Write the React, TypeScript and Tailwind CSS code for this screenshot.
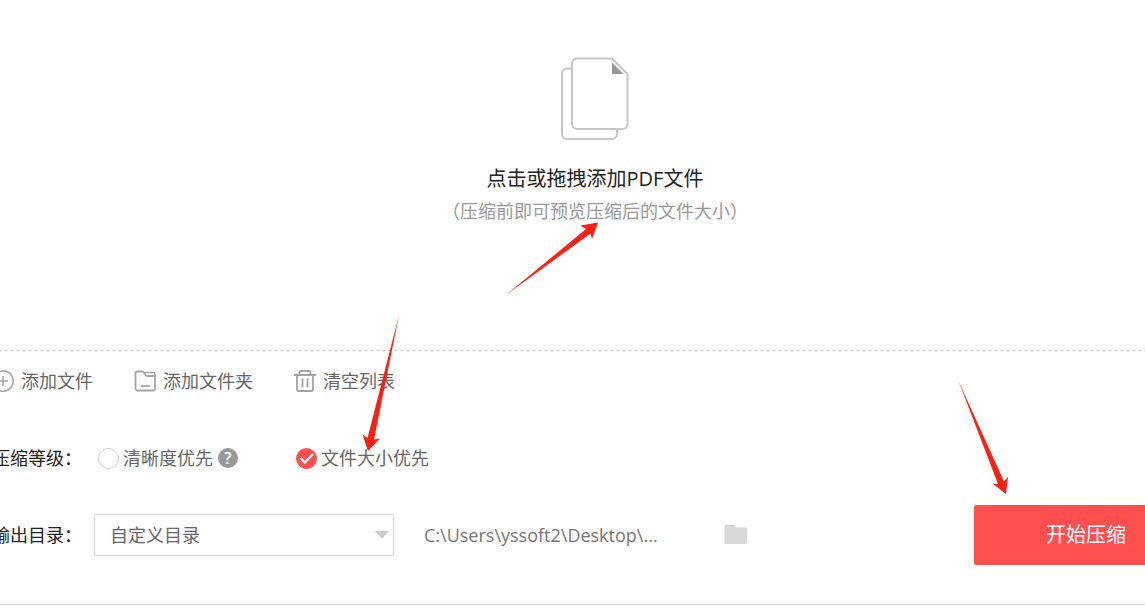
import { useState } from "react";

const LEVELS = [
  { id: "clarity", label: "清晰度优先", help: true },
  { id: "size", label: "文件大小优先", help: false },
];

function DocumentsIcon() {
  return (
    <svg width="70" height="84" viewBox="0 0 70 84" fill="none" stroke="#c6c6c6" strokeWidth="2">
      <path d="M11 11.5H7a5 5 0 0 0-5 5V77a5 5 0 0 0 5 5h45a5 5 0 0 0 5-5v-4" />
      <path d="M17 1.5H52L67.500 17V67a5 5 0 0 1-5 5H17a5 5 0 0 1-5-5V6.5a5 5 0 0 1 5-5Z" strokeLinejoin="round" />
      <path d="M52 5.5V17H63.5Z" fill="#999" stroke="none" />
    </svg>
  );
}

function PlusCircleIcon() {
  return (
    <svg width="22" height="22" viewBox="0 0 22 22" fill="none" stroke="#a3a3a3" strokeWidth="1.5">
      <circle cx="11" cy="11" r="10.2" />
      <path d="M6 11h10M11 6v10" />
    </svg>
  );
}

function FolderOutlineIcon() {
  return (
    <svg width="22" height="22" viewBox="0 0 22 22" fill="none" stroke="#a6a6a6" strokeWidth="1.8" strokeLinejoin="round">
      <path d="M3 1.500H9L12.500 6H21V18.500a2 2 0 0 1-2 2H3.500a2 2 0 0 1-2-2V3A1.500 1.500 0 0 1 3 1.500Z" />
      <path d="M10 2.500H19.500A1.500 1.500 0 0 1 21 4V6" strokeWidth="1.4" />
      <path d="M7 16h9" />
    </svg>
  );
}

function TrashIcon() {
  return (
    <svg width="22" height="22" viewBox="0 0 22 22" fill="none" stroke="#a3a3a3" strokeWidth="1.8">
      <path d="M0 5H22M5.500 5V2A1.200 1.200 0 0 1 6.700 1h8.600a1.200 1.200 0 0 1 1.200 1V5" />
      <path d="M3 5V19A2 2 0 0 0 5 21H17a2 2 0 0 0 2-2V5" />
      <path d="M8.500 8.500v9M13.500 8.500v9" />
    </svg>
  );
}

function FolderIcon() {
  return (
    <svg width="24" height="20" viewBox="0 0 24 20" fill="#d8d8d8">
      <path d="M2 0h8a1.5 1.5 0 0 1 1.5 1l.5 1.500H21a2 2 0 0 1 2 2V17a2 2 0 0 1-2 2H2a1.5 1.5 0 0 1-1.5-1.500V1.500A1.500 1.500 0 0 1 2 0Z" />
    </svg>
  );
}

function Arrows() {
  return (
    <svg
      className="pointer-events-none absolute top-0 left-0"
      width="1145"
      height="610"
      viewBox="0 0 1145 610"
      fill="#fb2112"
      aria-hidden="true"
    >
      <path d="M506 295L586 229L580.500 225.500L598 222.500L592 239L590.500 233.500Z" />
      <path d="M399 315L367.500 438L362.500 434.500L368 451L380 438.500L374 439.500Z" />
      <path d="M958.500 381L998 484L992.500 483.500L1006 494L1008 477L1004 481.500Z" />
    </svg>
  );
}

export default function App() {
  const [level, setLevel] = useState("size");

  return (
    <div className="relative overflow-hidden bg-white font-['Open_Sans','Noto_Sans_CJK_SC',sans-serif] text-lg leading-6 text-[#666]">
      <main className="-mr-[53px] -ml-2 pb-1">
        <button type="button" className="flex h-[350px] w-full flex-col items-center pt-[57px]">
          <DocumentsIcon />
          <span className="mt-6 text-xl leading-7 text-[#222]">点击或拖拽添加PDF文件</span>
          <span className="mt-1.5 text-[#999]">（压缩前即可预览压缩后的文件大小）</span>
        </button>
        <div className="h-px bg-[repeating-linear-gradient(90deg,#d0d0d0_0_4px,transparent_4px_6px)]" />

        <div className="mt-[18px] flex items-center gap-[41px]">
          <button type="button" className="flex items-center gap-[7px]">
            <PlusCircleIcon />
            添加文件
          </button>
          <button type="button" className="flex items-center gap-[7px]">
            <FolderOutlineIcon />
            添加文件夹
          </button>
          <button type="button" className="flex items-center gap-[7px]">
            <TrashIcon />
            清空列表
          </button>
        </div>

        <div role="radiogroup" aria-labelledby="level-label" className="mt-[53px] flex items-center">
          <span id="level-label" className="w-[106px] shrink-0 text-[#222]">
            压缩等级：
          </span>
          <div className="flex items-center gap-[58px]">
            {LEVELS.map((item) => (
              <div key={item.id} className="flex items-center gap-[5px]">
                <label className="flex items-center gap-1">
                  <span className="relative flex">
                    <input
                      type="radio"
                      name="level"
                      checked={level === item.id}
                      onChange={() => setLevel(item.id)}
                      className="size-[21px] appearance-none rounded-full border border-[#ccc] checked:border-[#ff4f4f] checked:bg-[#ff4f4f]"
                    />
                    {level === item.id && (
                      <svg className="pointer-events-none absolute inset-0" width="21" height="21" viewBox="0 0 21 21" fill="none" stroke="#fff" strokeWidth="2.4">
                        <path d="M4.500 10L8.800 14.500L17 6" />
                      </svg>
                    )}
                  </span>
                  {item.label}
                </label>
                {item.help && (
                  <button
                    type="button"
                    aria-label="帮助"
                    className="flex size-5 items-center justify-center rounded-full bg-[#999] text-base font-semibold text-white"
                  >
                    ?
                  </button>
                )}
              </div>
            ))}
          </div>
        </div>

        <div className="mt-[35px] flex items-center">
          <label htmlFor="output" className="w-[102px] shrink-0 text-[#222]">
            输出目录：
          </label>
          <div className="relative w-[300px]">
            <select id="output" className="h-[42px] w-full appearance-none border border-[#d8d8d8] bg-white px-[15px] text-[#666]">
              <option>自定义目录</option>
            </select>
            <svg className="pointer-events-none absolute top-[17px] right-[5px]" width="14" height="8" viewBox="0 0 14 8" fill="#ccc">
              <path d="M0 0h14L7 8Z" />
            </svg>
          </div>
          <span className="ml-[30px] w-[300px] truncate text-[#777]">C:\Users\yssoft2\Desktop\...</span>
          <button type="button" aria-label="打开目录">
            <FolderIcon />
          </button>
          <button type="button" className="ml-auto h-[60px] w-56 rounded-xs bg-[#ff4f4f] text-xl text-white">
            开始压缩
          </button>
        </div>

        <hr className="mt-[39px] border-[#d8d8d8]" />
      </main>
      <Arrows />
    </div>
  );
}
